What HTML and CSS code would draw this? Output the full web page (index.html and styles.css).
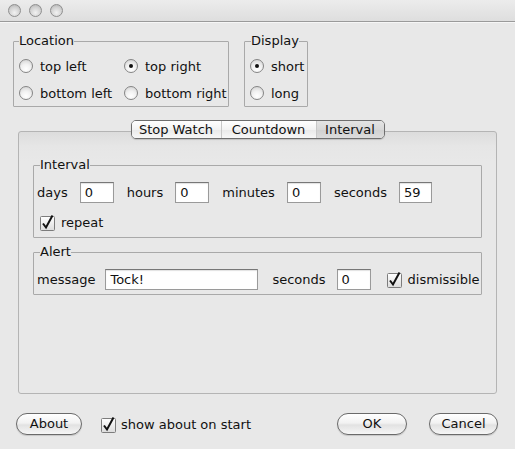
FILE: index.html
```html
<!DOCTYPE html>
<html>
<head>
<meta charset="utf-8">
<link rel="stylesheet" href="styles.css">
</head>
<body>
<div class="window">
  <div class="titlebar">
    <span class="light"></span><span class="light"></span><span class="light"></span>
  </div>

  <div class="top">
    <fieldset class="group location">
      <legend>Location</legend>
      <div class="radios">
        <label class="opt"><span class="radio"></span>top left</label>
        <label class="opt"><span class="radio on"></span>top right</label>
        <label class="opt"><span class="radio"></span>bottom left</label>
        <label class="opt"><span class="radio"></span>bottom right</label>
      </div>
    </fieldset>
    <fieldset class="group display">
      <legend>Display</legend>
      <div class="radios single">
        <label class="opt"><span class="radio on"></span>short</label>
        <label class="opt"><span class="radio"></span>long</label>
      </div>
    </fieldset>
  </div>

  <div class="tabwrap">
    <div class="tabs">
      <span class="tab t1">Stop Watch</span>
      <span class="tab t2">Countdown</span>
      <span class="tab t3 sel">Interval</span>
    </div>
    <div class="panel">
      <fieldset class="group interval">
        <legend>Interval</legend>
        <div class="row">
          <span class="lbl">days</span><span class="field w34">0</span>
          <span class="lbl">hours</span><span class="field w34">0</span>
          <span class="lbl">minutes</span><span class="field w34">0</span>
          <span class="lbl">seconds</span><span class="field w33">59</span>
        </div>
        <div class="checkrow repeat">
          <svg class="check" width="16" height="17" viewBox="0 0 16 17"><rect x="0.5" y="2.5" width="14" height="14" rx="1" fill="url(#g1)" stroke="#7c7c7c"/><defs><linearGradient id="g1" x1="0" y1="0" x2="0" y2="1"><stop offset="0" stop-color="#ffffff"/><stop offset="1" stop-color="#dcdcdc"/></linearGradient></defs><path d="M3 9.5 L6 13.5 L12.5 1.5" fill="none" stroke="#111" stroke-width="2"/></svg>
          <span>repeat</span>
        </div>
      </fieldset>
      <fieldset class="group alert">
        <legend>Alert</legend>
        <div class="row">
          <span class="lbl msg">message</span><span class="field wmsg">Tock!</span>
          <span class="lbl sec">seconds</span><span class="field w34">0</span>
          <span class="checkrow dism">
            <svg class="check" width="16" height="17" viewBox="0 0 16 17"><rect x="0.5" y="2.5" width="14" height="14" rx="1" fill="url(#g1)" stroke="#7c7c7c"/><path d="M3 9.5 L6 13.5 L12.5 1.5" fill="none" stroke="#111" stroke-width="2"/></svg>
            <span>dismissible</span>
          </span>
        </div>
      </fieldset>
    </div>
  </div>

  <div class="bottom">
    <button class="btn about">About</button>
    <span class="checkrow show">
      <svg class="check" width="16" height="17" viewBox="0 0 16 17"><rect x="0.5" y="2.5" width="14" height="14" rx="1" fill="url(#g1)" stroke="#7c7c7c"/><path d="M3 9.5 L6 13.5 L12.5 1.5" fill="none" stroke="#111" stroke-width="2"/></svg>
      <span>show about on start</span>
    </span>
    <span class="spacer"></span>
    <button class="btn ok">OK</button>
    <button class="btn cancel">Cancel</button>
  </div>
</div>
</body>
</html>
```
FILE: styles.css
```css
* { box-sizing: border-box; }
html, body { margin: 0; padding: 0; }
body {
  background: #e8e8e8;
  font-family: "DejaVu Sans", "Liberation Sans", sans-serif;
  font-size: 13px;
  color: #111;
  width: 515px;
  height: 449px;
  overflow: hidden;
}
.window { width: 515px; height: 449px; }

.titlebar {
  height: 22px;
  display: flex;
  gap: 8px;
  padding: 4px 0 0 8px;
  background: linear-gradient(#ececec, #dedede);
  border-bottom: 1px solid #9a9a9a;
  box-shadow: 0 1px 0 #f6f6f6;
}
.light {
  width: 13px; height: 13px;
  border-radius: 50%;
  border: 1px solid #8f8f8f;
  background: radial-gradient(circle at 50% 70%, #f2f2f2 0%, #cfcfcf 60%, #a9a9a9 100%);
}

.group {
  margin: 0;
  border: 1px solid #a9a9a9;
  border-radius: 1px;
  min-width: 0;
}
.group legend {
  padding: 0;
  line-height: 16px;
  height: 16px;
}

.top {
  display: flex;
  gap: 15px;
  margin-top: 11px;
  padding-left: 13px;
}
.location { width: 216px; padding: 6px 4px 2px 5px; }
.display { width: 64px; padding: 6px 2px 2px 5px; }
.display legend { margin-left: 1px; }

.radios {
  display: grid;
  grid-template-columns: 105px auto;
  row-gap: 5px;
}
.radios.single { grid-template-columns: auto; }
.opt {
  display: flex;
  align-items: center;
  height: 22px;
  white-space: nowrap;
}
.radio {
  width: 14px; height: 14px;
  border-radius: 50%;
  border: 1px solid #858585;
  background: radial-gradient(circle at 50% 75%, #ffffff 0%, #f1f1f1 45%, #cdcdcd 100%);
  margin-right: 7px;
  position: relative;
  flex: none;
}
.radio.on::after {
  content: "";
  position: absolute;
  left: 4px; top: 4px;
  width: 4px; height: 4px;
  border-radius: 50%;
  background: #111;
}

.tabwrap { margin: 13px 18px 0 18px; }
.tabs {
  position: relative;
  z-index: 1;
  display: flex;
  width: max-content;
  margin: 0 auto;
  height: 19px;
  border: 1px solid #6e6e6e;
  border-radius: 5px;
  overflow: hidden;
  box-shadow: 0 1px 1px rgba(0,0,0,0.15);
}
.tab {
  display: flex;
  align-items: center;
  justify-content: center;
  height: 17px;
  background: linear-gradient(#ffffff, #f3f3f3 50%, #e9e9e9 51%, #f7f7f7);
  border-right: 1px solid #c8c8c8;
}
.t1 { width: 90px; }
.t2 { width: 95px; }
.t3 { width: 67px; border-right: 0; }
.tab.sel { background: linear-gradient(#e4e4e4, #d8d8d8 50%, #d0d0d0 51%, #dcdcdc); }

.panel {
  margin-top: -8px;
  height: 263px;
  border: 1px solid #b4b4b4;
  border-radius: 3px;
  background: linear-gradient(#dcdcdc 0px, #e6e6e6 14px, #e8e8e8 30px);
  padding: 25px 14px 0 14px;
}

.interval { padding: 9px 3px 6px 3px; }
.interval legend, .alert legend { margin-left: 3px; }
.alert { margin-top: 6px; padding: 9px 3px 4px 3px; }

.row { display: flex; align-items: center; height: 21px; }
.lbl { margin-right: 12px; white-space: nowrap; }
.field {
  height: 21px;
  background: #fff;
  border: 1px solid #9a9a9a;
  border-top-color: #777;
  box-shadow: inset 0 1px 1px rgba(0,0,0,0.12);
  padding: 0 0 0 4px;
  line-height: 19px;
  margin-right: 13px;
  flex: none;
}
.w34 { width: 34px; }
.w33 { width: 33px; margin-right: 0; }
.wmsg { width: 153px; margin-right: 14px; }
.lbl.msg { margin-right: 10px; }
.lbl.sec { margin-right: 11px; }

.checkrow { display: flex; align-items: center; white-space: nowrap; }
.check { flex: none; display: block; }
.repeat { margin-top: 11px; margin-left: 3px; height: 17px; }
.repeat span { margin-left: 5px; }
.dism { margin-left: 3px; }
.dism span { margin-left: 5px; }

.bottom {
  display: flex;
  align-items: center;
  margin-top: 19px;
  padding: 0 17px 0 16px;
}
.btn {
  font-family: "DejaVu Sans", "Liberation Sans", sans-serif;
  font-size: 13px;
  color: #111;
  height: 22px;
  border: 1px solid #6a6a6a;
  border-radius: 11px;
  background: linear-gradient(#ffffff, #f2f2f2 45%, #e2e2e2 55%, #f6f6f6);
  box-shadow: 0 1px 1px rgba(0,0,0,0.15);
  padding: 0;
  line-height: 20px;
}
.about { width: 66px; }
.show { margin-left: 19px; }
.show span { margin-left: 4px; }
.spacer { flex: 1; }
.ok { width: 70px; }
.cancel { width: 69px; margin-left: 22px; }
```
